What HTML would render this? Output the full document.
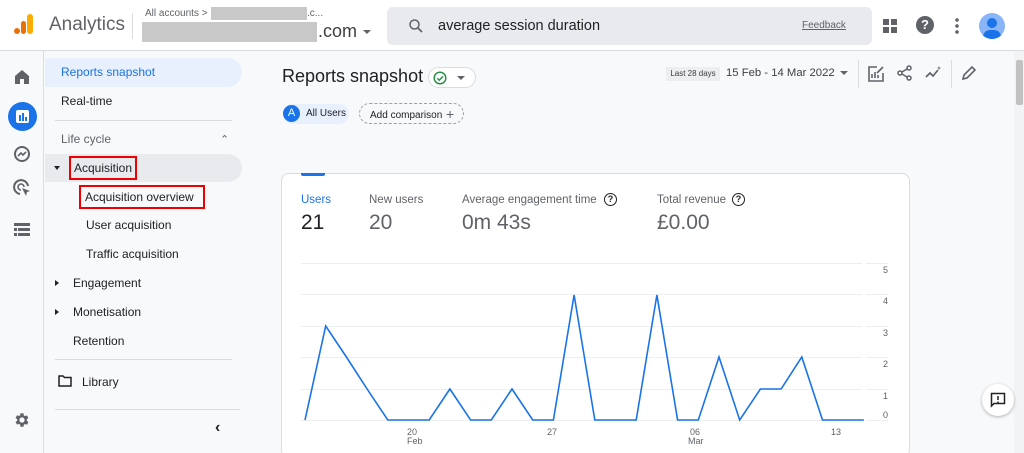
<!DOCTYPE html>
<html><head><meta charset="utf-8"><style>
*{box-sizing:border-box;margin:0;padding:0}
html{width:1024px;height:453px;overflow:hidden}
body{width:1024px;height:453px;overflow:hidden;background:#f8f9fa;font-family:"Liberation Sans",Arial,sans-serif;color:#202124;position:relative}
.abs{position:absolute;white-space:nowrap}
.top{left:0;top:0;width:1024px;height:51px;background:#fff;border-bottom:1px solid #dadce0}
.side{left:0;top:51px;width:44px;height:402px;background:#f8f9fa;border-right:1px solid #dadce0}
.nav{left:45px;top:51px;width:200px;height:402px}
.item{position:absolute;font-size:12px;color:#202124;white-space:nowrap}
.sel{background:#e8f0fe;color:#1a73e8;border-radius:0 16px 16px 0}
.red{border:2px solid #e00;}
.card{left:281px;top:173px;width:629px;height:285px;background:#fff;border:1px solid #dadce0;border-radius:8px}
</style></head><body>
<div class="abs top">
  <div class="abs" style="left:14px;top:14px;width:20px;height:22px">
    <div class="abs" style="left:0;top:14px;width:6px;height:6px;border-radius:3px;background:#e8710a"></div>
    <div class="abs" style="left:7px;top:7px;width:5px;height:13px;border-radius:3px;background:#e8710a"></div>
    <div class="abs" style="left:13px;top:0;width:6px;height:20px;border-radius:3px;background:#f9ab00"></div>
  </div>
  <div class="abs" style="left:49px;top:14px;font-size:19px;color:#5f6368">Analytics</div>
  <div class="abs" style="left:132px;top:13px;width:1px;height:26px;background:#dadce0"></div>
  <div class="abs" style="left:145px;top:8px;font-size:10px;color:#5f6368">All accounts &gt;</div>
  <div class="abs" style="left:211px;top:7px;width:96px;height:13px;background:#c8c8c8"></div>
  <div class="abs" style="left:307px;top:8px;font-size:10px;color:#5f6368">.c...</div>
  <div class="abs" style="left:142px;top:22px;width:175px;height:20px;background:#c8c8c8"></div>
  <div class="abs" style="left:318px;top:21px;font-size:18px;color:#3c4043">.com</div>
  <div class="abs" style="left:363px;top:30px;border:4px solid transparent;border-top:4px solid #5f6368"></div>
  <div class="abs" style="left:387px;top:7px;width:485px;height:38px;background:#e8eaed;border-radius:6px">
    <svg class="abs" style="left:20px;top:10px" width="18" height="18" viewBox="0 0 24 24"><circle cx="10" cy="10" r="6" fill="none" stroke="#5f6368" stroke-width="2"/><path d="M14.5 14.5L20 20" stroke="#5f6368" stroke-width="2.2"/></svg>
    <div class="abs" style="left:51px;top:11px;font-size:14.5px;color:#202124">average session duration</div>
    <div class="abs" style="left:415px;top:13px;font-size:10px;color:#5f6368;text-decoration:underline">Feedback</div>
  </div>
  <svg class="abs" style="left:881px;top:17px" width="18" height="18" viewBox="0 0 18 18" fill="#5f6368"><rect x="2" y="2" width="6" height="6"/><rect x="10" y="2" width="6" height="6"/><rect x="2" y="10" width="6" height="6"/><rect x="10" y="10" width="6" height="6"/></svg>
  <div class="abs" style="left:916px;top:16px;width:18px;height:18px;border-radius:50%;background:#5f6368;color:#fff;font-size:13px;font-weight:bold;text-align:center;line-height:18px">?</div>
  <div class="abs" style="left:955px;top:17px;width:4px;height:17px;background:radial-gradient(circle,#5f6368 1.6px,transparent 2px) 0 0/4px 6px"></div>
  <div class="abs" style="left:979px;top:13px;width:26px;height:26px;border-radius:50%;background:#8ab4f8;overflow:hidden">
    <div class="abs" style="left:8px;top:5px;width:10px;height:10px;border-radius:50%;background:#1a73e8"></div>
    <div class="abs" style="left:4px;top:17px;width:18px;height:14px;border-radius:9px;background:#1a73e8"></div>
  </div>
</div>
<div class="abs side">
  <svg class="abs" style="left:14px;top:18px" width="16" height="16" viewBox="0 0 16 16"><path d="M8 1L1 7v8h5v-5h4v5h5V7z" fill="#5f6368"/></svg>
  <div class="abs" style="left:8px;top:51px;width:29px;height:29px;border-radius:50%;background:#1a73e8"><div class="abs" style="left:8px;top:8px;width:13px;height:13px;border-radius:2px;background:#fff"></div><div class="abs" style="left:11px;top:13px;width:1.5px;height:6px;background:#1a73e8"></div><div class="abs" style="left:14px;top:11px;width:1.5px;height:8px;background:#1a73e8"></div><div class="abs" style="left:17px;top:15px;width:1.5px;height:4px;background:#1a73e8"></div></div>
  <svg class="abs" style="left:13px;top:94px" width="18" height="18" viewBox="0 0 18 18"><circle cx="9" cy="9" r="7" fill="none" stroke="#5f6368" stroke-width="2"/><path d="M5 11l3-3 2 2 3-3" fill="none" stroke="#5f6368" stroke-width="1.6"/></svg>
  <svg class="abs" style="left:13px;top:128px" width="18" height="18" viewBox="0 0 18 18"><path d="M15 7A7 7 0 1 0 7 15" fill="none" stroke="#5f6368" stroke-width="2"/><path d="M11 8A3 3 0 1 0 8 11" fill="none" stroke="#5f6368" stroke-width="1.6"/><path d="M9 9l8 3-3 1-1 4z" fill="#5f6368"/></svg>
  <svg class="abs" style="left:14px;top:172px" width="16" height="14" viewBox="0 0 16 14" fill="#5f6368"><rect x="0" y="0" width="16" height="3"/><rect x="0" y="5" width="3" height="3"/><rect x="4" y="5" width="12" height="3"/><rect x="0" y="10" width="3" height="3"/><rect x="4" y="10" width="12" height="3"/></svg>
  <svg class="abs" style="left:13px;top:360px" width="18" height="18" viewBox="0 0 24 24"><path fill="#5f6368" d="M19.4 13a7.5 7.5 0 0 0 0-2l2.1-1.6-2-3.5-2.5 1a7 7 0 0 0-1.7-1L15 3h-4l-.4 2.6a7 7 0 0 0-1.7 1l-2.5-1-2 3.5L6.6 11a7.5 7.5 0 0 0 0 2l-2.2 1.6 2 3.5 2.5-1a7 7 0 0 0 1.7 1L11 21h4l.4-2.6a7 7 0 0 0 1.7-1l2.5 1 2-3.5zM13 15.5a3.5 3.5 0 1 1 0-7 3.5 3.5 0 0 1 0 7z" transform="translate(-1 0)"/></svg>
</div>
<div class="abs nav">
  <div class="item sel" style="left:0;top:7px;width:197px;height:29px;line-height:29px;padding-left:16px">Reports snapshot</div>
  <div class="item" style="left:16px;top:43px">Real-time</div>
  <div class="abs" style="left:10px;top:69px;width:177px;height:1px;background:#dadce0"></div>
  <div class="item" style="left:16px;top:81px;color:#5f6368">Life cycle</div>
  <div class="abs" style="left:175px;top:82px;font-size:11px;color:#5f6368">&#8963;</div>
  <div class="abs" style="left:0;top:103px;width:197px;height:28px;background:#e8eaed;border-radius:0 14px 14px 0"></div>
  <div class="abs" style="left:9px;top:115px;border:3px solid transparent;border-top:4px solid #202124"></div>
  <div class="item red" style="left:24px;top:105px;padding:2px 3px;line-height:16px">Acquisition</div>
  <div class="item red" style="left:34px;top:134px;padding:2px 4px;width:126px;line-height:16px">Acquisition overview</div>
  <div class="item" style="left:41px;top:167px">User acquisition</div>
  <div class="item" style="left:41px;top:196px">Traffic acquisition</div>
  <div class="abs" style="left:10px;top:229px;border:3px solid transparent;border-left:4px solid #202124"></div>
  <div class="item" style="left:28px;top:225px">Engagement</div>
  <div class="abs" style="left:10px;top:258px;border:3px solid transparent;border-left:4px solid #202124"></div>
  <div class="item" style="left:28px;top:254px">Monetisation</div>
  <div class="item" style="left:28px;top:283px">Retention</div>
  <div class="abs" style="left:10px;top:308px;width:177px;height:1px;background:#dadce0"></div>
  <svg class="abs" style="left:13px;top:324px" width="14" height="12" viewBox="0 0 14 12"><path d="M1 1h4l1.5 1.5H13V11H1z" fill="none" stroke="#202124" stroke-width="1.5"/></svg>
  <div class="item" style="left:37px;top:324px">Library</div>
  <div class="abs" style="left:10px;top:358px;width:185px;height:1px;background:#dadce0"></div>
  <div class="abs" style="left:170px;top:368px;font-size:16px;font-weight:bold;color:#202124">&lsaquo;</div>
</div>
<div class="abs" style="left:282px;top:66px;font-size:18px;color:#202124">Reports snapshot</div>
<div class="abs" style="left:428px;top:67px;width:48px;height:21px;border:1px solid #dadce0;border-radius:11px;background:#fff">
  <svg class="abs" style="left:4px;top:3px" width="14" height="14" viewBox="0 0 14 14"><circle cx="7" cy="7" r="5.8" fill="none" stroke="#1e8e3e" stroke-width="1.4"/><path d="M4.3 7.2l2 2 3.6-3.8" fill="none" stroke="#1e8e3e" stroke-width="1.4"/></svg>
  <div class="abs" style="left:28px;top:8px;border:4px solid transparent;border-top:4px solid #5f6368"></div>
</div>
<div class="abs" style="left:283px;top:104px;width:66px;height:20px;border-radius:10px;background:#e8f0fe"></div>
<div class="abs" style="left:283px;top:105px;width:17px;height:17px;border-radius:50%;background:#1a73e8;color:#fff;font-size:11px;text-align:center;line-height:17px">A</div>
<div class="abs" style="left:306px;top:108px;font-size:10px">All Users</div>
<div class="abs" style="left:359px;top:103px;width:105px;height:21px;border:1px dashed #9aa0a6;border-radius:11px;font-size:10px;line-height:19px;padding-left:10px">Add comparison <span style="font-size:14px;color:#5f6368;position:relative;top:1px;left:1px">+</span></div>
<div class="abs" style="left:666px;top:67px;width:54px;height:14px;background:#eceef0;font-size:8px;color:#3c4043;text-align:center;line-height:14px">Last 28 days</div>
<div class="abs" style="left:726px;top:67px;font-size:11.3px;color:#3c4043">15 Feb - 14 Mar 2022</div>
<div class="abs" style="left:840px;top:71px;border:4px solid transparent;border-top:4px solid #5f6368"></div>
<div class="abs" style="left:858px;top:60px;width:1px;height:28px;background:#dadce0"></div>
<svg class="abs" style="left:867px;top:65px" width="18" height="18" viewBox="0 0 18 18"><path d="M10 2H2v14h14V8" fill="none" stroke="#5f6368" stroke-width="1.6"/><path d="M5 13V9M8 13V7M11 13V10M10 8l6-6" stroke="#5f6368" stroke-width="1.6"/></svg>
<svg class="abs" style="left:897px;top:65px" width="16" height="16" viewBox="0 0 16 16"><circle cx="12" cy="3" r="2" fill="none" stroke="#5f6368" stroke-width="1.5"/><circle cx="3" cy="8" r="2" fill="none" stroke="#5f6368" stroke-width="1.5"/><circle cx="12" cy="13" r="2" fill="none" stroke="#5f6368" stroke-width="1.5"/><path d="M5 7l5-3M5 9l5 3" stroke="#5f6368" stroke-width="1.5"/></svg>
<svg class="abs" style="left:925px;top:65px" width="18" height="16" viewBox="0 0 18 16"><path d="M1 12l4-4 3 3 5-6" fill="none" stroke="#5f6368" stroke-width="1.7"/><path d="M14 1l.6 1.6L16 3l-1.4.5L14 5l-.6-1.5L12 3l1.4-.4z" fill="#5f6368"/></svg>
<div class="abs" style="left:951px;top:60px;width:1px;height:28px;background:#dadce0"></div>
<svg class="abs" style="left:961px;top:65px" width="16" height="16" viewBox="0 0 16 16"><path d="M2 14l1-4 8-8 3 3-8 8z" fill="none" stroke="#5f6368" stroke-width="1.6"/></svg>
<div class="abs card">
  <div class="abs" style="left:19px;top:-1px;width:24px;height:3px;background:#1a73e8;border-radius:0 0 2px 2px"></div>
  <div class="abs" style="left:19px;top:20px;font-size:11.5px;color:#1a73e8">Users</div>
  <div class="abs" style="left:19px;top:37px;font-size:21px;color:#202124">21</div>
  <div class="abs" style="left:87px;top:20px;font-size:11.5px;color:#5f6368">New users</div>
  <div class="abs" style="left:87px;top:37px;font-size:21px;color:#5f6368">20</div>
  <div class="abs" style="left:180px;top:20px;font-size:11.5px;color:#5f6368">Average engagement time</div>
  <div class="abs" style="left:322px;top:19px;width:13px;height:13px;border:1.5px solid #202124;border-radius:50%;font-size:9px;font-weight:bold;text-align:center;line-height:10px">?</div>
  <div class="abs" style="left:180px;top:37px;font-size:21px;color:#5f6368">0m 43s</div>
  <div class="abs" style="left:375px;top:20px;font-size:11.5px;color:#5f6368">Total revenue</div>
  <div class="abs" style="left:450px;top:19px;width:13px;height:13px;border:1.5px solid #202124;border-radius:50%;font-size:9px;font-weight:bold;text-align:center;line-height:10px">?</div>
  <div class="abs" style="left:375px;top:37px;font-size:21px;color:#5f6368">£0.00</div>
</div>
<svg class="abs" style="left:0;top:0" width="1024" height="453">
  <g stroke="#eceef0" stroke-width="1">
    <path d="M301 263.5H862M866 263.5H888M301 294.5H862M866 294.5H888M301 326.5H862M866 326.5H888M301 357.5H862M866 357.5H888M301 389.5H862M866 389.5H888M301 420.5H862M866 420.5H888"/>
  </g>
  <polyline fill="none" stroke="#1a73e8" stroke-width="1.6" stroke-linejoin="miter" points="305,420 325.7,326 346.4,357 367.1,389 387.8,420 408.5,420 429.2,420 449.9,389 470.6,420 491.3,420 512,389 532.7,420 553.4,420 574.1,295 594.8,420 615.5,420 636.2,420 656.9,295 677.6,420 698.3,420 719,357 739.7,420 760.4,389 781.1,389 801.8,357 822.5,420 843.2,420 863.9,420"/>
  <g font-family="Liberation Sans,Arial,sans-serif" font-size="9" fill="#5f6368">
    <text x="883" y="273">5</text><text x="883" y="304">4</text><text x="883" y="336">3</text><text x="883" y="367">2</text><text x="883" y="399">1</text><text x="883" y="418">0</text>
    <text x="407" y="435">20</text><text x="407" y="444">Feb</text>
    <text x="547" y="435">27</text>
    <text x="690" y="435">06</text><text x="688" y="444">Mar</text>
    <text x="831" y="435">13</text>
  </g>
</svg>
<div class="abs" style="left:1014px;top:51px;width:10px;height:402px;background:#f1f3f4"></div>
<div class="abs" style="left:1016px;top:60px;width:7px;height:45px;background:#c1c1c1;border-radius:2px"></div>
<div class="abs" style="left:982px;top:384px;width:32px;height:32px;border-radius:50%;background:#fff;box-shadow:0 1px 3px rgba(0,0,0,.3)">
  <svg class="abs" style="left:8px;top:8px" width="16" height="16" viewBox="0 0 16 16"><path d="M1.5 1.5h13v10H4l-2.5 2.5z" fill="none" stroke="#202124" stroke-width="1.5"/><path d="M8 4v4M8 9.5v1.5" stroke="#202124" stroke-width="1.5"/></svg>
</div>
</body></html>
